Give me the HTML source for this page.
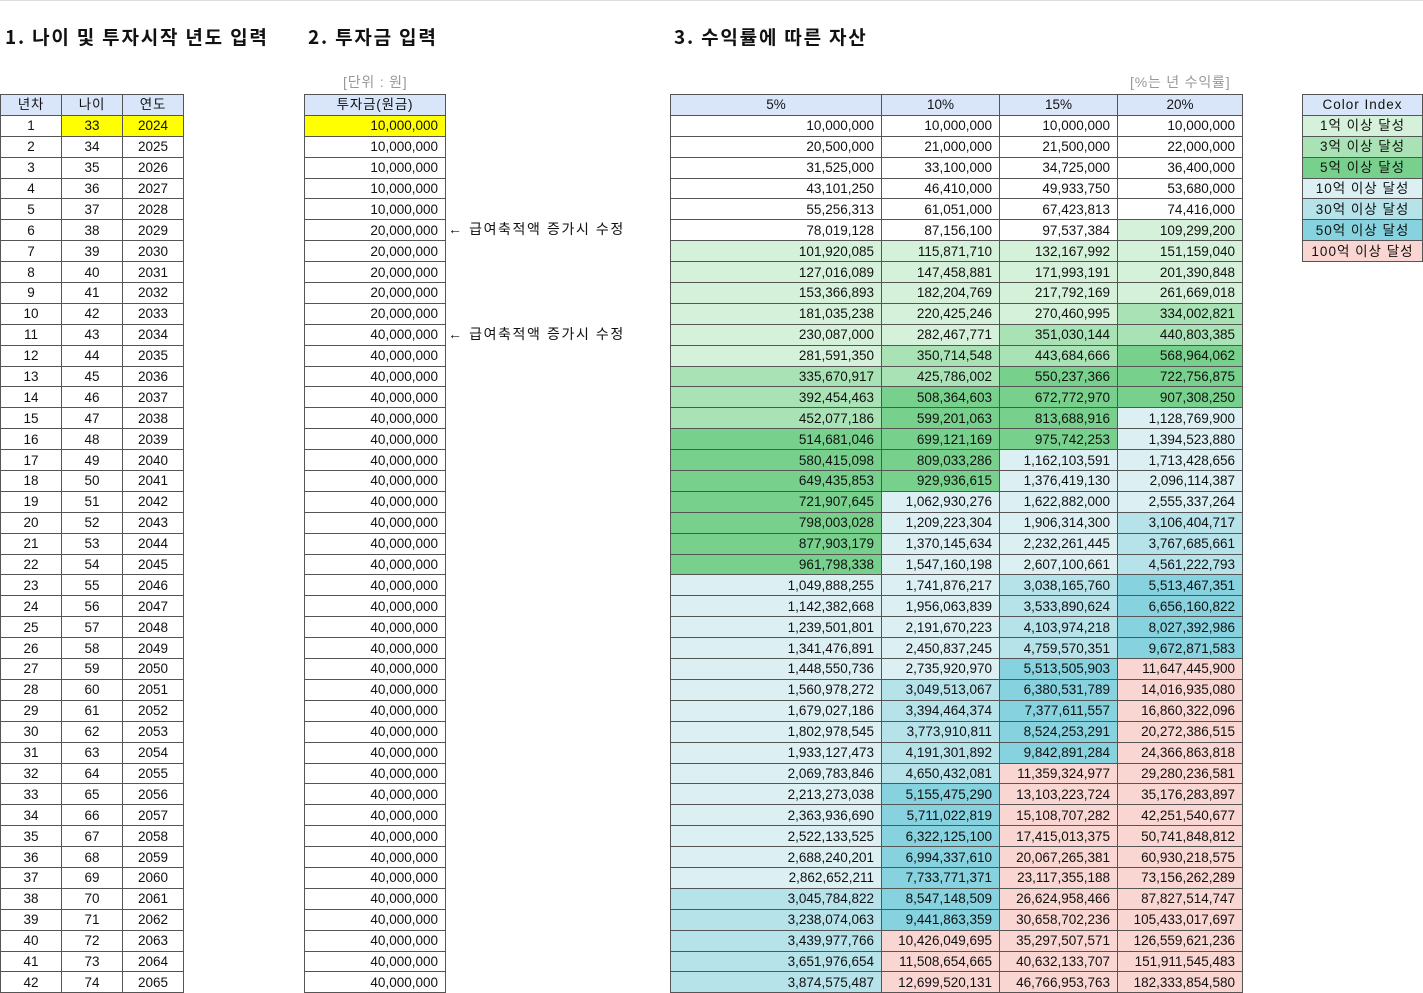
<!DOCTYPE html>
<html><head><meta charset="utf-8"><style>
body{margin:0;width:1423px;height:993px;background:#fff;position:relative;overflow:hidden;font-family:"Liberation Sans","Noto Sans CJK KR",sans-serif;color:#111}
.topline{position:absolute;left:0;top:0;width:1423px;height:1px;background:#ddd}
.t{position:absolute;font-size:19px;font-weight:bold;top:23px;letter-spacing:1.8px;font-family:"Noto Sans CJK KR","Liberation Sans",sans-serif}
.g{position:absolute;font-size:14px;color:#999;top:72px;letter-spacing:0.8px;font-family:"Liberation Sans","Noto Sans CJK KR",sans-serif}
.n{position:absolute;font-size:14px;left:448px;letter-spacing:1.6px;font-family:"Liberation Sans","Noto Sans CJK KR",sans-serif}
table{position:absolute;top:94px;border-collapse:collapse;table-layout:fixed;font-size:13.5px}
td{border:1px solid #555;padding:0 7px;height:19.9px;line-height:19px;text-align:right;white-space:nowrap;overflow:hidden}
tr:first-child td{background:#d9e6fa;text-align:center}
.c td{text-align:center}
.y{background:#ffff00}
.a{background:#d5f1da}.b{background:#a9e2b5}.c5{background:#77d18c}.d{background:#dcf0f4}.e{background:#b6e2ea}.f{background:#86d2df}.g2{background:#fad6d2}
#ci td{text-align:center;letter-spacing:1px;padding:0 2px;font-family:"Liberation Sans","Noto Sans CJK KR",sans-serif}
.hk{letter-spacing:0.8px}
</style></head><body>
<div class="topline"></div>
<div class="t" style="left:5px">1. 나이 및 투자시작 년도 입력</div>
<div class="t" style="left:308px">2. 투자금 입력</div>
<div class="t" style="left:674px">3. 수익률에 따른 자산</div>
<div class="g" style="left:343px">[단위 : 원]</div>
<div class="g" style="left:1130px">[%는 년 수익률]</div>
<div class="n" style="top:219px">← 급여축적액 증가시 수정</div>
<div class="n" style="top:324px">← 급여축적액 증가시 수정</div>

<table class="c" style="left:0;width:184px"><colgroup><col style="width:61px"><col style="width:61px"><col style="width:61px"></colgroup>
<tr class="hk"><td>년차</td><td>나이</td><td>연도</td></tr>
<tr><td>1</td><td class="y">33</td><td class="y">2024</td></tr>
<tr><td>2</td><td>34</td><td>2025</td></tr><tr><td>3</td><td>35</td><td>2026</td></tr><tr><td>4</td><td>36</td><td>2027</td></tr><tr><td>5</td><td>37</td><td>2028</td></tr><tr><td>6</td><td>38</td><td>2029</td></tr><tr><td>7</td><td>39</td><td>2030</td></tr><tr><td>8</td><td>40</td><td>2031</td></tr><tr><td>9</td><td>41</td><td>2032</td></tr><tr><td>10</td><td>42</td><td>2033</td></tr><tr><td>11</td><td>43</td><td>2034</td></tr><tr><td>12</td><td>44</td><td>2035</td></tr><tr><td>13</td><td>45</td><td>2036</td></tr><tr><td>14</td><td>46</td><td>2037</td></tr><tr><td>15</td><td>47</td><td>2038</td></tr><tr><td>16</td><td>48</td><td>2039</td></tr><tr><td>17</td><td>49</td><td>2040</td></tr><tr><td>18</td><td>50</td><td>2041</td></tr><tr><td>19</td><td>51</td><td>2042</td></tr><tr><td>20</td><td>52</td><td>2043</td></tr><tr><td>21</td><td>53</td><td>2044</td></tr><tr><td>22</td><td>54</td><td>2045</td></tr><tr><td>23</td><td>55</td><td>2046</td></tr><tr><td>24</td><td>56</td><td>2047</td></tr><tr><td>25</td><td>57</td><td>2048</td></tr><tr><td>26</td><td>58</td><td>2049</td></tr><tr><td>27</td><td>59</td><td>2050</td></tr><tr><td>28</td><td>60</td><td>2051</td></tr><tr><td>29</td><td>61</td><td>2052</td></tr><tr><td>30</td><td>62</td><td>2053</td></tr><tr><td>31</td><td>63</td><td>2054</td></tr><tr><td>32</td><td>64</td><td>2055</td></tr><tr><td>33</td><td>65</td><td>2056</td></tr><tr><td>34</td><td>66</td><td>2057</td></tr><tr><td>35</td><td>67</td><td>2058</td></tr><tr><td>36</td><td>68</td><td>2059</td></tr><tr><td>37</td><td>69</td><td>2060</td></tr><tr><td>38</td><td>70</td><td>2061</td></tr><tr><td>39</td><td>71</td><td>2062</td></tr><tr><td>40</td><td>72</td><td>2063</td></tr><tr><td>41</td><td>73</td><td>2064</td></tr><tr><td>42</td><td>74</td><td>2065</td></tr>
</table>

<table style="left:304px;width:142px">
<tr class="hk"><td>투자금(원금)</td></tr>
<tr><td class="y">10,000,000</td></tr><tr><td>10,000,000</td></tr><tr><td>10,000,000</td></tr><tr><td>10,000,000</td></tr><tr><td>10,000,000</td></tr>
<tr><td>20,000,000</td></tr><tr><td>20,000,000</td></tr><tr><td>20,000,000</td></tr><tr><td>20,000,000</td></tr><tr><td>20,000,000</td></tr>
<tr><td>40,000,000</td></tr><tr><td>40,000,000</td></tr><tr><td>40,000,000</td></tr><tr><td>40,000,000</td></tr><tr><td>40,000,000</td></tr><tr><td>40,000,000</td></tr><tr><td>40,000,000</td></tr><tr><td>40,000,000</td></tr><tr><td>40,000,000</td></tr><tr><td>40,000,000</td></tr><tr><td>40,000,000</td></tr><tr><td>40,000,000</td></tr><tr><td>40,000,000</td></tr><tr><td>40,000,000</td></tr><tr><td>40,000,000</td></tr><tr><td>40,000,000</td></tr><tr><td>40,000,000</td></tr><tr><td>40,000,000</td></tr><tr><td>40,000,000</td></tr><tr><td>40,000,000</td></tr><tr><td>40,000,000</td></tr><tr><td>40,000,000</td></tr><tr><td>40,000,000</td></tr><tr><td>40,000,000</td></tr><tr><td>40,000,000</td></tr><tr><td>40,000,000</td></tr><tr><td>40,000,000</td></tr><tr><td>40,000,000</td></tr><tr><td>40,000,000</td></tr><tr><td>40,000,000</td></tr><tr><td>40,000,000</td></tr><tr><td>40,000,000</td></tr>
</table>

<table style="left:670px;width:573px"><colgroup><col style="width:211px"><col style="width:118px"><col style="width:118px"><col style="width:125px"></colgroup>
<tr><td>5%</td><td>10%</td><td>15%</td><td>20%</td></tr>
<tr><td>10,000,000</td><td>10,000,000</td><td>10,000,000</td><td>10,000,000</td></tr>
<tr><td>20,500,000</td><td>21,000,000</td><td>21,500,000</td><td>22,000,000</td></tr>
<tr><td>31,525,000</td><td>33,100,000</td><td>34,725,000</td><td>36,400,000</td></tr>
<tr><td>43,101,250</td><td>46,410,000</td><td>49,933,750</td><td>53,680,000</td></tr>
<tr><td>55,256,313</td><td>61,051,000</td><td>67,423,813</td><td>74,416,000</td></tr>
<tr><td>78,019,128</td><td>87,156,100</td><td>97,537,384</td><td class="a">109,299,200</td></tr>
<tr><td class="a">101,920,085</td><td class="a">115,871,710</td><td class="a">132,167,992</td><td class="a">151,159,040</td></tr>
<tr><td class="a">127,016,089</td><td class="a">147,458,881</td><td class="a">171,993,191</td><td class="a">201,390,848</td></tr>
<tr><td class="a">153,366,893</td><td class="a">182,204,769</td><td class="a">217,792,169</td><td class="a">261,669,018</td></tr>
<tr><td class="a">181,035,238</td><td class="a">220,425,246</td><td class="a">270,460,995</td><td class="b">334,002,821</td></tr>
<tr><td class="a">230,087,000</td><td class="a">282,467,771</td><td class="b">351,030,144</td><td class="b">440,803,385</td></tr>
<tr><td class="a">281,591,350</td><td class="b">350,714,548</td><td class="b">443,684,666</td><td class="c5">568,964,062</td></tr>
<tr><td class="b">335,670,917</td><td class="b">425,786,002</td><td class="c5">550,237,366</td><td class="c5">722,756,875</td></tr>
<tr><td class="b">392,454,463</td><td class="c5">508,364,603</td><td class="c5">672,772,970</td><td class="c5">907,308,250</td></tr>
<tr><td class="b">452,077,186</td><td class="c5">599,201,063</td><td class="c5">813,688,916</td><td class="d">1,128,769,900</td></tr>
<tr><td class="c5">514,681,046</td><td class="c5">699,121,169</td><td class="c5">975,742,253</td><td class="d">1,394,523,880</td></tr>
<tr><td class="c5">580,415,098</td><td class="c5">809,033,286</td><td class="d">1,162,103,591</td><td class="d">1,713,428,656</td></tr>
<tr><td class="c5">649,435,853</td><td class="c5">929,936,615</td><td class="d">1,376,419,130</td><td class="d">2,096,114,387</td></tr>
<tr><td class="c5">721,907,645</td><td class="d">1,062,930,276</td><td class="d">1,622,882,000</td><td class="d">2,555,337,264</td></tr>
<tr><td class="c5">798,003,028</td><td class="d">1,209,223,304</td><td class="d">1,906,314,300</td><td class="e">3,106,404,717</td></tr>
<tr><td class="c5">877,903,179</td><td class="d">1,370,145,634</td><td class="d">2,232,261,445</td><td class="e">3,767,685,661</td></tr>
<tr><td class="c5">961,798,338</td><td class="d">1,547,160,198</td><td class="d">2,607,100,661</td><td class="e">4,561,222,793</td></tr>
<tr><td class="d">1,049,888,255</td><td class="d">1,741,876,217</td><td class="e">3,038,165,760</td><td class="f">5,513,467,351</td></tr>
<tr><td class="d">1,142,382,668</td><td class="d">1,956,063,839</td><td class="e">3,533,890,624</td><td class="f">6,656,160,822</td></tr>
<tr><td class="d">1,239,501,801</td><td class="d">2,191,670,223</td><td class="e">4,103,974,218</td><td class="f">8,027,392,986</td></tr>
<tr><td class="d">1,341,476,891</td><td class="d">2,450,837,245</td><td class="e">4,759,570,351</td><td class="f">9,672,871,583</td></tr>
<tr><td class="d">1,448,550,736</td><td class="d">2,735,920,970</td><td class="f">5,513,505,903</td><td class="g2">11,647,445,900</td></tr>
<tr><td class="d">1,560,978,272</td><td class="e">3,049,513,067</td><td class="f">6,380,531,789</td><td class="g2">14,016,935,080</td></tr>
<tr><td class="d">1,679,027,186</td><td class="e">3,394,464,374</td><td class="f">7,377,611,557</td><td class="g2">16,860,322,096</td></tr>
<tr><td class="d">1,802,978,545</td><td class="e">3,773,910,811</td><td class="f">8,524,253,291</td><td class="g2">20,272,386,515</td></tr>
<tr><td class="d">1,933,127,473</td><td class="e">4,191,301,892</td><td class="f">9,842,891,284</td><td class="g2">24,366,863,818</td></tr>
<tr><td class="d">2,069,783,846</td><td class="e">4,650,432,081</td><td class="g2">11,359,324,977</td><td class="g2">29,280,236,581</td></tr>
<tr><td class="d">2,213,273,038</td><td class="f">5,155,475,290</td><td class="g2">13,103,223,724</td><td class="g2">35,176,283,897</td></tr>
<tr><td class="d">2,363,936,690</td><td class="f">5,711,022,819</td><td class="g2">15,108,707,282</td><td class="g2">42,251,540,677</td></tr>
<tr><td class="d">2,522,133,525</td><td class="f">6,322,125,100</td><td class="g2">17,415,013,375</td><td class="g2">50,741,848,812</td></tr>
<tr><td class="d">2,688,240,201</td><td class="f">6,994,337,610</td><td class="g2">20,067,265,381</td><td class="g2">60,930,218,575</td></tr>
<tr><td class="d">2,862,652,211</td><td class="f">7,733,771,371</td><td class="g2">23,117,355,188</td><td class="g2">73,156,262,289</td></tr>
<tr><td class="e">3,045,784,822</td><td class="f">8,547,148,509</td><td class="g2">26,624,958,466</td><td class="g2">87,827,514,747</td></tr>
<tr><td class="e">3,238,074,063</td><td class="f">9,441,863,359</td><td class="g2">30,658,702,236</td><td class="g2">105,433,017,697</td></tr>
<tr><td class="e">3,439,977,766</td><td class="g2">10,426,049,695</td><td class="g2">35,297,507,571</td><td class="g2">126,559,621,236</td></tr>
<tr><td class="e">3,651,976,654</td><td class="g2">11,508,654,665</td><td class="g2">40,632,133,707</td><td class="g2">151,911,545,483</td></tr>
<tr><td class="e">3,874,575,487</td><td class="g2">12,699,520,131</td><td class="g2">46,766,953,763</td><td class="g2">182,333,854,580</td></tr>
</table>

<table id="ci" style="left:1302px;width:121px">
<tr><td>Color Index</td></tr>
<tr><td class="a">1억 이상 달성</td></tr>
<tr><td class="b">3억 이상 달성</td></tr>
<tr><td class="c5">5억 이상 달성</td></tr>
<tr><td class="d">10억 이상 달성</td></tr>
<tr><td class="e">30억 이상 달성</td></tr>
<tr><td class="f">50억 이상 달성</td></tr>
<tr><td class="g2">100억 이상 달성</td></tr>
</table>
</body></html>
